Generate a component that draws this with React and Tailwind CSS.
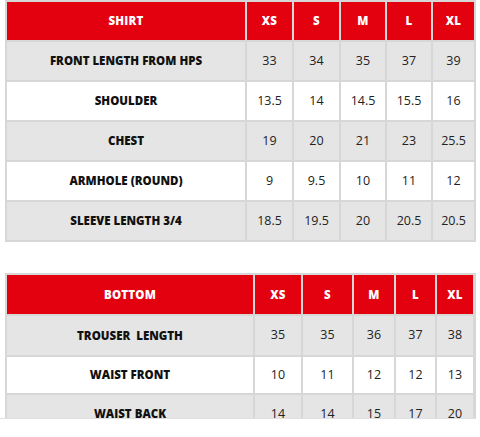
import React from 'react';

const shirtSizes = ['XS', 'S', 'M', 'L', 'XL'];

const shirtRows = [
  { label: 'FRONT LENGTH FROM HPS', values: ['33', '34', '35', '37', '39'] },
  { label: 'SHOULDER', values: ['13.5', '14', '14.5', '15.5', '16'] },
  { label: 'CHEST', values: ['19', '20', '21', '23', '25.5'] },
  { label: 'ARMHOLE (ROUND)', values: ['9', '9.5', '10', '11', '12'] },
  { label: 'SLEEVE LENGTH 3/4', values: ['18.5', '19.5', '20', '20.5', '20.5'] },
];

const bottomRows = [
  { label: 'TROUSER  LENGTH', values: ['35', '35', '36', '37', '38'] },
  { label: 'WAIST FRONT', values: ['10', '11', '12', '12', '13'] },
  { label: 'WAIST BACK', values: ['14', '14', '15', '17', '20'] },
];

const SizeTable = ({ title, rows, cols, rowHeights }) => (
  <div className={`grid ${cols} gap-[2px] bg-[#d7d7d7] p-[2px]`}>
    {[title, ...shirtSizes].map((h) => (
      <div
        key={h}
        className={`${rowHeights[0]} bg-[#e3000f] text-white font-extrabold text-[11.5px] flex items-center justify-center tracking-[0.2px]`}
      >
        {h}
      </div>
    ))}
    {rows.map((row, r) => {
      const bg = r % 2 === 0 ? 'bg-[#e5e5e5]' : 'bg-white';
      const h = rowHeights[r + 1];
      return (
        <React.Fragment key={row.label}>
          <div className={`${h} ${bg} flex items-center justify-center text-[11.5px] font-extrabold text-[#111] whitespace-pre`}>
            {row.label}
          </div>
          {row.values.map((v, i) => (
            <div key={i} className={`${h} ${bg} flex items-center justify-center text-[12.5px] text-[#222]`}>
              {v}
            </div>
          ))}
        </React.Fragment>
      );
    })}
  </div>
);

const App = () => {
  return (
    <div className="w-[480px] h-[437px] bg-white overflow-hidden font-['Open_Sans','Liberation_Sans',sans-serif]">
      <div className="pl-[5px] w-[476px]">
        <SizeTable
          title="SHIRT"
          rows={shirtRows}
          cols="grid-cols-[238px_45px_45px_44px_44px_41px]"
          rowHeights={['h-[38px]', 'h-[38px]', 'h-[38px]', 'h-[38px]', 'h-[38px]', 'h-[38px]']}
        />
      </div>
      <div className="mt-[31px] pl-[5px] w-[476px] h-[146px] overflow-hidden border-b border-[#e0e0e0]">
        <SizeTable
          title="BOTTOM"
          rows={bottomRows}
          cols="grid-cols-[246px_46px_49px_40px_39px_36px]"
          rowHeights={['h-[39px]', 'h-[39px]', 'h-[36px]', 'h-[38px]']}
        />
      </div>
    </div>
  );
};

export default App;
